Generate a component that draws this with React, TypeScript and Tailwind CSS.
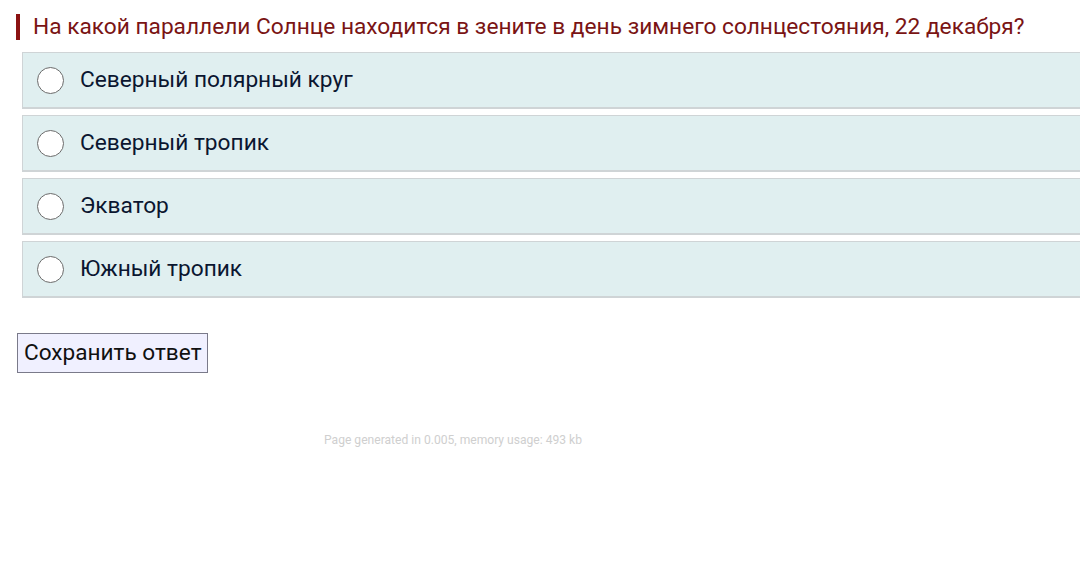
import React, { useState } from 'react';

const answers = [
  'Северный полярный круг',
  'Северный тропик',
  'Экватор',
  'Южный тропик',
];

export default function App() {
  const [picked, setPicked] = useState<number | null>(null);

  return (
    <main className="min-h-screen w-[1080px] overflow-hidden bg-white font-['Roboto',sans-serif]">
      <div className="pt-[14px] pl-[16px]">
        {/* Question */}
        <h1 className="border-l-[4px] border-[#8b1212] pl-[13px] text-[22.7px] leading-[26px] text-[#7a1414]">
          На какой параллели Солнце находится в зените в день зимнего солнцестояния, 22 декабря?
        </h1>

        {/* Answers */}
        <div className="mt-[12px] ml-[6px] flex w-[1080px] flex-col gap-[6px]">
          {answers.map((a, i) => (
            <label
              key={a}
              className="flex h-[57px] cursor-pointer items-center border border-[#cfd4d6] border-b-2 bg-[#e0eff0] pl-[14px]"
              onClick={() => setPicked(i)}
            >
              <span className="flex h-[27px] w-[27px] items-center justify-center rounded-full border border-[#6b6b6b] bg-white">
                {picked === i && <span className="h-[13px] w-[13px] rounded-full bg-[#1a5fd0]" />}
              </span>
              <span className="ml-[16px] text-[22.7px] text-[#0b1630]">{a}</span>
            </label>
          ))}
        </div>

        <button className="mt-[35px] ml-[1px] flex h-[40px] w-[191px] items-center whitespace-nowrap border border-[#7a7a8a] bg-[#f0f0ff] pl-[6px] text-[22.6px] leading-none text-[#111]">
          Сохранить ответ
        </button>
      </div>

      <p className="mt-[58px] pl-[324px] text-[12.1px] text-[#cfcfcf]">
        Page generated in 0.005, memory usage: 493 kb
      </p>
    </main>
  );
}
